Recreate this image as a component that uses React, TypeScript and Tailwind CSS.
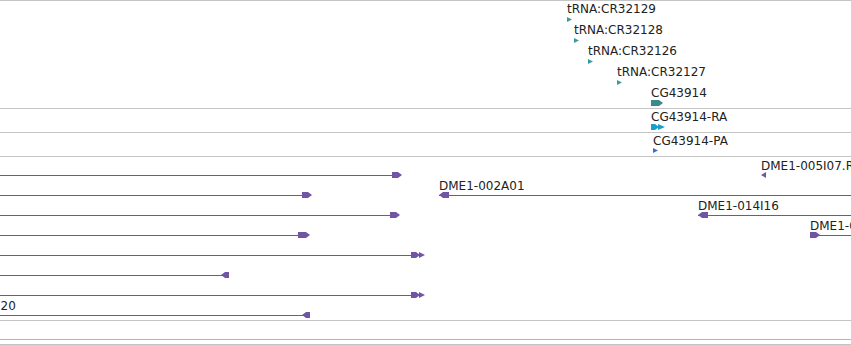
import type { ReactNode } from "react";

const PURPLE = "#7154a4";

type Head = "right" | "left" | "double";

function Arrow({ head, color, w = 10 }: { head: Head; color: string; w?: number }) {
	if (head === "double") {
		return (
			<svg width={15} height={6} viewBox="0 0 15 6" className="block">
				<polygon points="0,0 5,0 9,3 5,6 0,6" fill={color} />
				<polygon points="8,0 14,3 8,6" fill={color} />
			</svg>
		);
	}
	if (head === "left") {
		return (
			<svg width={w} height={6} viewBox={`0 0 ${w} 6`} className="block">
				<polygon points={`0,3 4,0 ${w},0 ${w},6 4,6`} fill={color} />
			</svg>
		);
	}
	return (
		<svg width={w} height={6} viewBox={`0 0 ${w} 6`} className="block">
			<polygon points={`0,0 ${w - 4},0 ${w},3 ${w - 4},6 0,6`} fill={color} />
		</svg>
	);
}

function Tri({ color, size = 5 }: { color: string; size?: number }) {
	return (
		<svg width={size} height={size} viewBox="0 0 5 5" className="block">
			<polygon points="0,0 5,2.5 0,5" fill={color} />
		</svg>
	);
}

function Label({ x, y, children }: { x: number; y: number; children: ReactNode }) {
	return (
		<div
			className="absolute whitespace-nowrap text-[12px] leading-[14px] text-[#222]"
			style={{ left: x, top: y }}
		>
			{children}
		</div>
	);
}

function Glyph({ x, y, children }: { x: number; y: number; children: ReactNode }) {
	return (
		<div className="absolute" style={{ left: x, top: y }}>
			{children}
		</div>
	);
}

type Clone = {
	y: number;
	from: number;
	to: number;
	head: Head;
	headX: number;
	headW?: number;
	label?: string;
	labelX?: number;
};

// rows in the clone track, y relative to track top (page y 157)
const clones: Clone[] = [
	{ y: 18, from: 0, to: 394, head: "right", headX: 392 },
	{ y: 38, from: 0, to: 304, head: "right", headX: 302 },
	{ y: 58, from: 0, to: 392, head: "right", headX: 390 },
	{ y: 78, from: 0, to: 300, head: "right", headX: 298, headW: 12 },
	{ y: 98, from: 0, to: 412, head: "double", headX: 411 },
	{ y: 118, from: 0, to: 222, head: "left", headX: 221, headW: 8 },
	{ y: 138, from: 0, to: 412, head: "double", headX: 411 },
	{ y: 158, from: 0, to: 303, head: "left", headX: 302, headW: 8, label: "DME1-036I20", labelX: -65 },
	{ y: 38, from: 439, to: 851, head: "left", headX: 439, label: "DME1-002A01", labelX: 439 },
	{ y: 58, from: 698, to: 851, head: "left", headX: 698, label: "DME1-014I16", labelX: 698 },
	{ y: 78, from: 810, to: 851, head: "right", headX: 810, label: "DME1-007B05", labelX: 810 },
];

const trnas = [
	{ name: "tRNA:CR32129", x: 567 },
	{ name: "tRNA:CR32128", x: 574 },
	{ name: "tRNA:CR32126", x: 588 },
	{ name: "tRNA:CR32127", x: 617 },
];

export default function App() {
	return (
		<div
			className="flex h-[345px] w-[851px] flex-col overflow-hidden border-t border-[#c4c4c4] bg-white"
			style={{ fontFamily: '"DejaVu Sans", Verdana, sans-serif' }}
		>
			{/* gene track */}
			<div className="relative h-[108px] shrink-0 border-b border-[#c4c4c4]">
				{trnas.map((t, i) => (
					<div key={t.name}>
						<Label x={t.x} y={1 + i * 21}>
							{t.name}
						</Label>
						<Glyph x={t.x} y={16 + i * 21}>
							<Tri color="#3b9a9e" />
						</Glyph>
					</div>
				))}
				<Label x={651} y={85}>
					CG43914
				</Label>
				<Glyph x={651} y={99}>
					<svg width={12} height={6} viewBox="0 0 12 6" className="block">
						<polygon points="0,0 8,0 12,3 8,6 0,6" fill="#3a8a8c" />
					</svg>
				</Glyph>
			</div>

			{/* transcript track */}
			<div className="relative h-[24px] shrink-0 border-b border-[#c4c4c4]">
				<Label x={651} y={1}>
					CG43914-RA
				</Label>
				<Glyph x={651} y={15}>
					<svg width={15} height={6} viewBox="0 0 15 6" className="block">
						<polygon points="0,0 4,0 8,3 4,6 0,6" fill="#1aa0c6" />
						<polygon points="7,0 14,3 7,6" fill="#1aa0c6" />
					</svg>
				</Glyph>
			</div>

			{/* protein track */}
			<div className="relative h-[24px] shrink-0 border-b border-[#c4c4c4]">
				<Label x={653} y={1}>
					CG43914-PA
				</Label>
				<Glyph x={653} y={15}>
					<Tri color="#3a6cd8" />
				</Glyph>
			</div>

			{/* clone track */}
			<div className="relative h-[164px] shrink-0 border-b border-[#c4c4c4]">
				<Label x={761} y={2}>
					DME1-005I07.R
				</Label>
				<Glyph x={761} y={15}>
					<svg width={5} height={6} viewBox="0 0 5 6" className="block">
						<polygon points="0,3 5,0 5,6" fill={PURPLE} />
					</svg>
				</Glyph>
				{clones.map((c, i) => (
					<div key={i}>
						{c.label && (
							<Label x={c.labelX ?? c.from} y={c.y - 16}>
								{c.label}
							</Label>
						)}
						<div
							className="absolute h-px bg-[#7154a4]"
							style={{ left: c.from, top: c.y, width: c.to - c.from }}
						/>
						<Glyph x={c.headX} y={c.y - 3}>
							<Arrow head={c.head} color={PURPLE} w={c.headW} />
						</Glyph>
					</div>
				))}
			</div>

			<div className="h-[19px] shrink-0 border-b border-[#8fc1dd]" />
			<div className="h-[5px] shrink-0 border-b border-[#c4c4c4]" />
		</div>
	);
}
